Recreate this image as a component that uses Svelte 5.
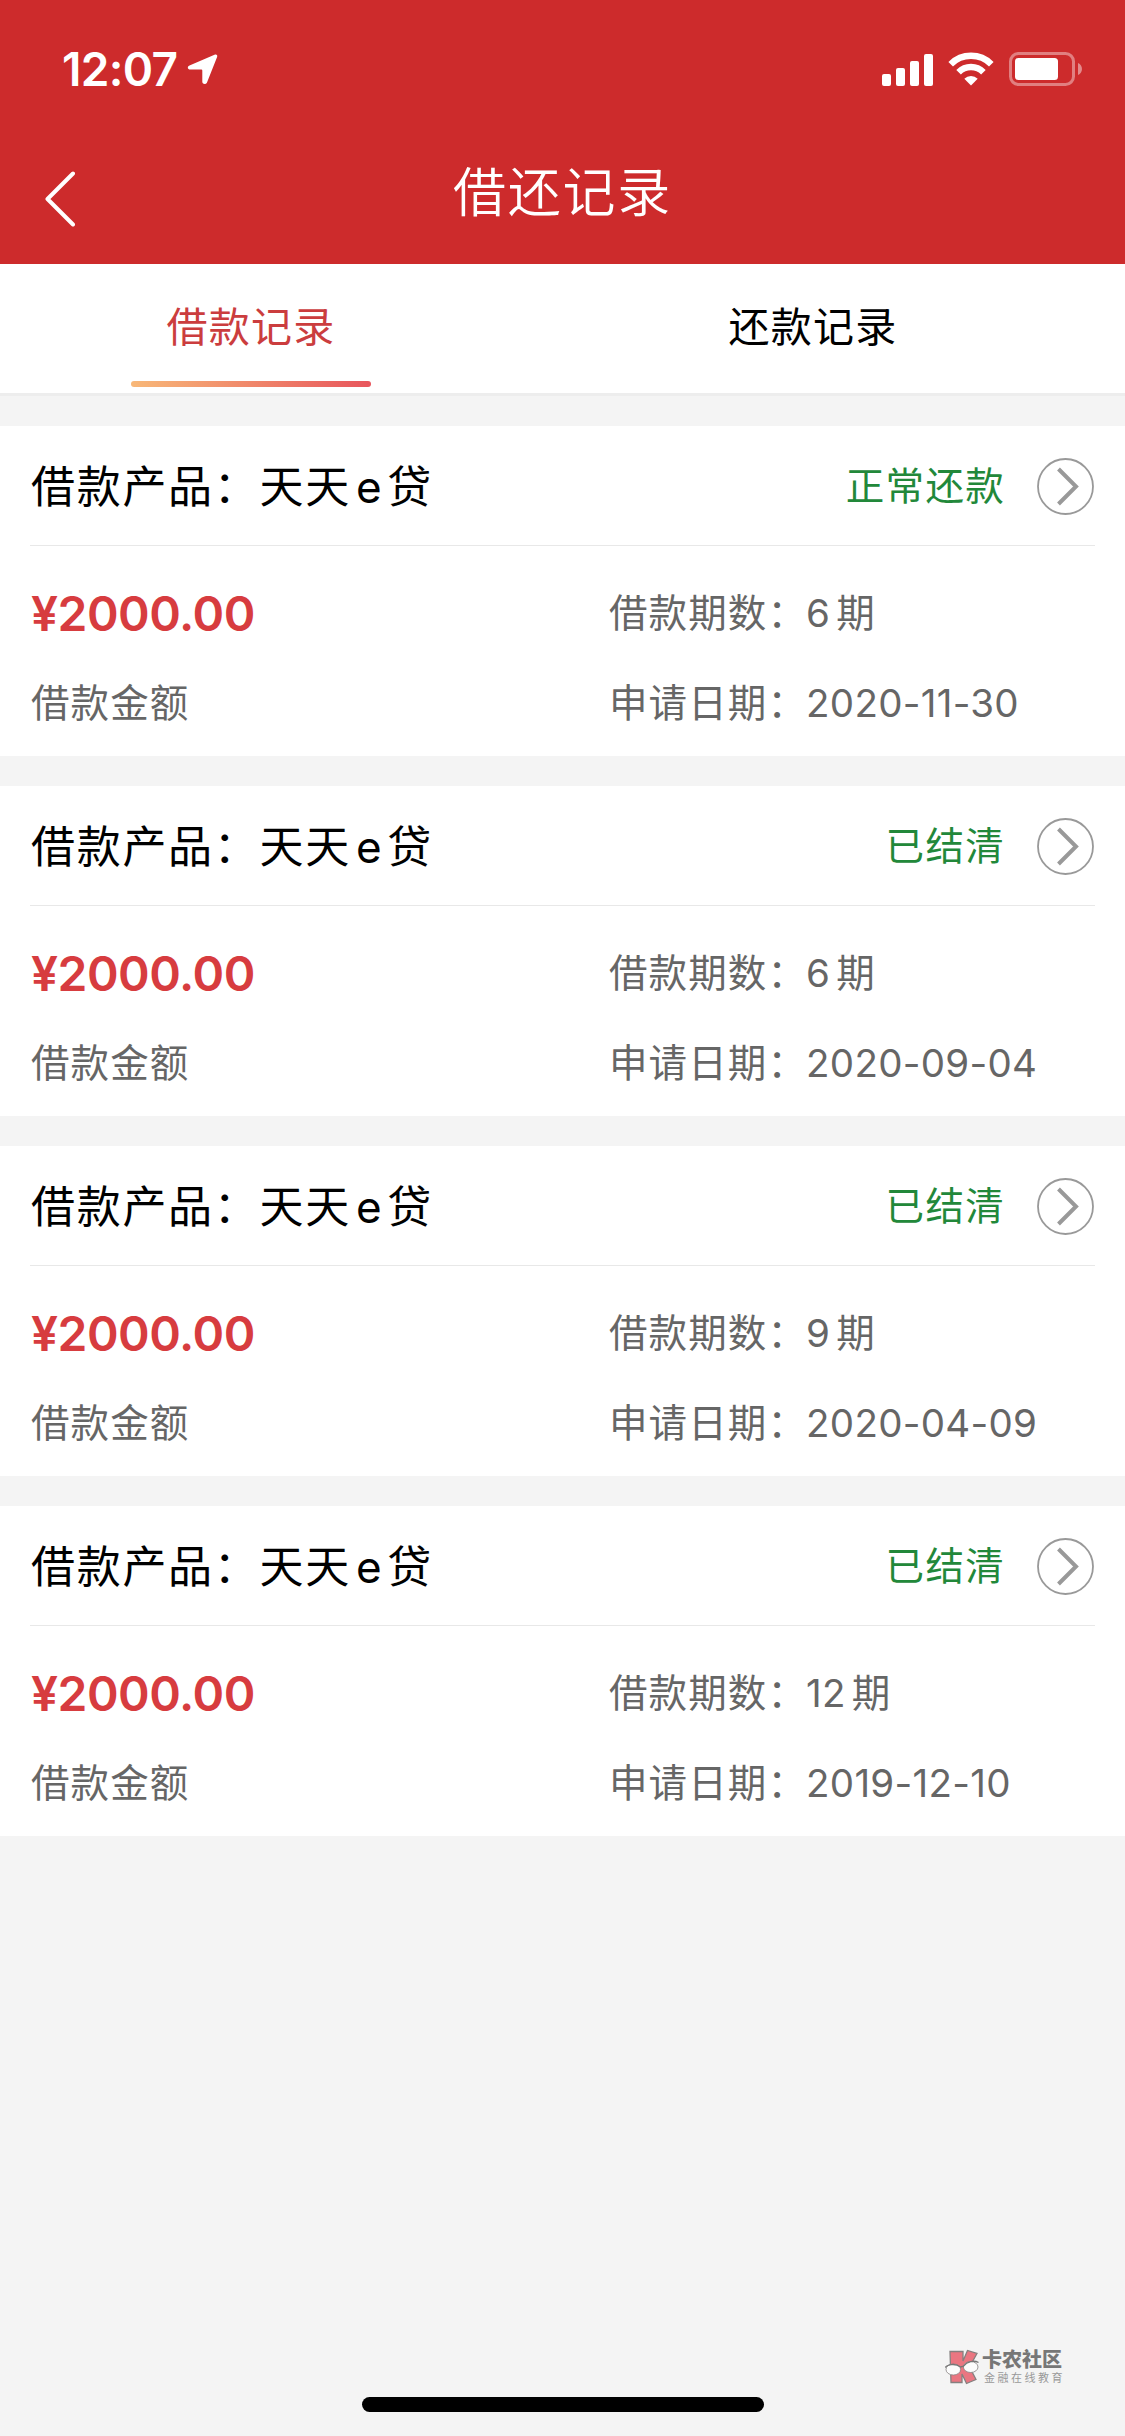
<script lang="ts">
  type Loan = {
    status: string;
    amount: string;
    periods: number;
    date: string;
  };

  const tabs = ["借款记录", "还款记录"];
  let current = 0;

  const loans: Loan[] = [
    { status: "正常还款", amount: "2000.00", periods: 6, date: "2020-11-30" },
    { status: "已结清", amount: "2000.00", periods: 6, date: "2020-09-04" },
    { status: "已结清", amount: "2000.00", periods: 9, date: "2020-04-09" },
    { status: "已结清", amount: "2000.00", periods: 12, date: "2019-12-10" },
  ];
</script>

<div class="page">
  <header>
    <div class="status-bar">
      <span class="time">12:07</span>
      <svg class="location" width="32" height="32" viewBox="0 0 32 32">
        <path
          d="M2.500 12.500 27.500 1.700c2-.8 3.300.4 2.600 2.300L20 29.500c-1 2.300-4.700 1.800-4.700-.8V17.500c0-.6-.3-.9-.9-.9H3.200C.4 16.600 0 13.600 2.500 12.500z"
          fill="#fff"
        />
      </svg>
      <svg class="signal" width="52" height="33" viewBox="0 0 52 33">
        <g fill="#fff">
          <rect x="0" y="21" width="9" height="12" rx="2" />
          <rect x="14" y="15" width="9" height="18" rx="2" />
          <rect x="28" y="8" width="9" height="25" rx="2" />
          <rect x="42" y="1" width="9" height="32" rx="2" />
        </g>
      </svg>
      <svg class="wifi" width="46" height="34" viewBox="0 0 46 34">
        <g fill="none" stroke="#fff" stroke-width="6.500">
          <path d="M2.700 12.200A28.800 28.800 0 0 1 43.300 12.200" />
          <path d="M10.600 20.200A17.600 17.600 0 0 1 35.400 20.200" />
        </g>
        <path d="M23 33.500 16.300 26.700a9.400 9.400 0 0 1 13.400 0z" fill="#fff" />
      </svg>
      <svg class="battery" width="74" height="34" viewBox="0 0 74 34">
        <rect
          x="1.500"
          y="1.500"
          width="63"
          height="31"
          rx="8"
          fill="none"
          stroke="#fff"
          stroke-width="3"
          opacity="0.4"
        />
        <rect x="6" y="6" width="43" height="22" rx="3.500" fill="#fff" />
        <path d="M69 11c5.300 2.300 5.300 9.700 0 12z" fill="#fff" opacity="0.450" />
      </svg>
    </div>
    <div class="nav">
      <svg class="back" width="30" height="56" viewBox="0 0 30 56">
        <path
          d="M28 2.500 2.500 28 28 53.500"
          fill="none"
          stroke="#fff"
          stroke-width="4"
          stroke-linecap="round"
          stroke-linejoin="round"
        />
      </svg>
      <h1>借还记录</h1>
    </div>
  </header>

  <div class="tabs">
    {#each tabs as tab, i}
      <button class="tab" class:active={i === current} on:click={() => (current = i)}>
        {tab}
      </button>
    {/each}
  </div>

  <main>
    {#each loans as loan}
      <section class="card">
        <div class="card-head">
          <span class="product">借款产品：天天<span class="latin">e</span>贷</span>
          <span class="status">{loan.status}</span>
          <svg class="more" width="57" height="57" viewBox="0 0 57 57">
            <g fill="none" stroke="#999">
              <circle cx="28.500" cy="28.500" r="27.500" stroke-width="1.800" />
              <path d="M21.500 11 39 28.500 21.500 46" stroke-width="4" />
            </g>
          </svg>
        </div>
        <div class="card-body">
          <div class="amount">¥{loan.amount}</div>
          <div class="field">借款期数：<span class="num">{loan.periods}</span>期</div>
          <div class="field">借款金额</div>
          <div class="field">申请日期：<span class="num">{loan.date}</span></div>
        </div>
      </section>
    {/each}
  </main>

  <div class="watermark">
    <svg width="34" height="36" viewBox="0 0 34 36">
      <path
        d="M5 2.500h13V12L22.500 1.500l9.500 3L24.500 18l6.500 12.500-9.500 4L17 25v8.500H6z"
        fill="#ea7681"
        stroke="#858080"
        stroke-width="1.300"
      />
      <g fill="#fcfcfc" stroke="#858080" stroke-width="0.800">
        <ellipse cx="8.300" cy="20.500" rx="7.300" ry="5.500" />
        <ellipse cx="25.700" cy="18" rx="7.300" ry="5.500" />
      </g>
      <path
        d="M.3 18.500c2-3 10-4.500 15.200-.5l3-.8C22 12.500 29 11 33.500 13.500"
        fill="none"
        stroke="#777"
        stroke-width="1.400"
      />
    </svg>
    <div>
      <div class="brand">卡农社区</div>
      <div class="slogan">金融在线教育</div>
    </div>
  </div>
  <div class="home-indicator"></div>
</div>

<style>
  :global(body) {
    background-color: #f4f4f4;
  }

  .page {
    position: relative;
    width: 1125px;
    height: 2436px;
    overflow: hidden;
    background-color: #f4f4f4;
    color: #000;
    font-family: Inter, "Noto Sans CJK SC", sans-serif;
  }

  svg {
    display: block;
    flex: none;
  }

  header {
    height: 264px;
    background-color: #cd2b2c;
    color: #fff;
  }

  .status-bar {
    display: flex;
    align-items: center;
    height: 138px;
    padding: 0 42px 0 62px;
  }
  .time {
    width: 125px;
    font-size: 46px;
    font-weight: 600;
    letter-spacing: -0.7px;
  }
  .signal {
    margin-left: auto;
  }
  .wifi {
    margin: 0 15px 0 14px;
  }

  .nav {
    display: flex;
    align-items: center;
    height: 114px;
    padding: 0 45px;
  }
  .back {
    margin-top: 8px;
  }
  h1 {
    flex: 1;
    margin: 0 30px 5px 0;
    font-size: 53px;
    font-weight: 350;
    letter-spacing: 1.8px;
    line-height: 80px;
    text-align: center;
  }

  .tabs {
    display: flex;
    height: 129px;
    padding-left: 1px;
    border-bottom: 3px solid #ededed;
    background-color: #fff;
  }
  .tab {
    display: flex;
    flex-direction: column;
    align-items: center;
    justify-content: space-between;
    width: 500px;
    margin-right: 62px;
    padding: 33px 0 6px;
    border: 0;
    background: none;
    color: #000;
    font: inherit;
    font-size: 41px;
    line-height: 60px;
    letter-spacing: 1.3px;
  }
  .tab.active {
    color: #cb3d3e;
  }
  .tab.active::after {
    content: "";
    width: 240px;
    height: 6px;
    border-radius: 3px;
    background: linear-gradient(90deg, #f8b878, #e8555c);
  }

  main {
    display: flex;
    flex-direction: column;
    gap: 30px;
    padding-top: 30px;
  }

  .card {
    height: 330px;
    padding: 0 30px;
    box-sizing: border-box;
    background-color: #fff;
  }
  .card-head {
    display: flex;
    align-items: center;
    height: 119px;
    border-bottom: 1px solid #e8e8e8;
  }
  .product {
    flex: 1;
    padding: 0 0 4px 1px;
    font-size: 44px;
    letter-spacing: 1.7px;
  }
  .latin {
    margin: 0 4px 0 5px;
  }
  .status {
    margin-right: 32px;
    padding-bottom: 5px;
    color: #22883a;
    font-size: 38.5px;
    letter-spacing: 1.3px;
  }
  .more {
    margin: 2px 1px 0 0;
  }

  .card-body {
    display: grid;
    grid-template-columns: 578px 1fr;
    grid-auto-rows: 90px;
    align-items: center;
    padding-top: 23px;
  }
  .amount {
    padding: 0 0 2px 1px;
    color: #d73c3f;
    font-size: 48px;
    font-weight: 600;
    letter-spacing: -0.5px;
  }
  .field {
    padding: 0 0 8px 1px;
    color: #666;
    font-size: 38.5px;
    letter-spacing: 1.1px;
  }
  .num {
    margin: 0 6px 0 -1px;
    letter-spacing: 0.3px;
  }

  .watermark {
    position: absolute;
    right: 60px;
    bottom: 51px;
    display: flex;
    gap: 3px;
    color: #777;
    white-space: nowrap;
  }
  .brand {
    font-size: 20px;
    font-weight: 900;
    letter-spacing: 0;
    line-height: 22px;
  }
  .slogan {
    padding-left: 2px;
    color: #999;
    font-size: 11px;
    letter-spacing: 2.500px;
    line-height: 14px;
  }

  .home-indicator {
    position: absolute;
    bottom: 24px;
    left: 50%;
    width: 402px;
    height: 15px;
    margin-left: -201px;
    border-radius: 8px;
    background-color: #000;
  }
</style>
